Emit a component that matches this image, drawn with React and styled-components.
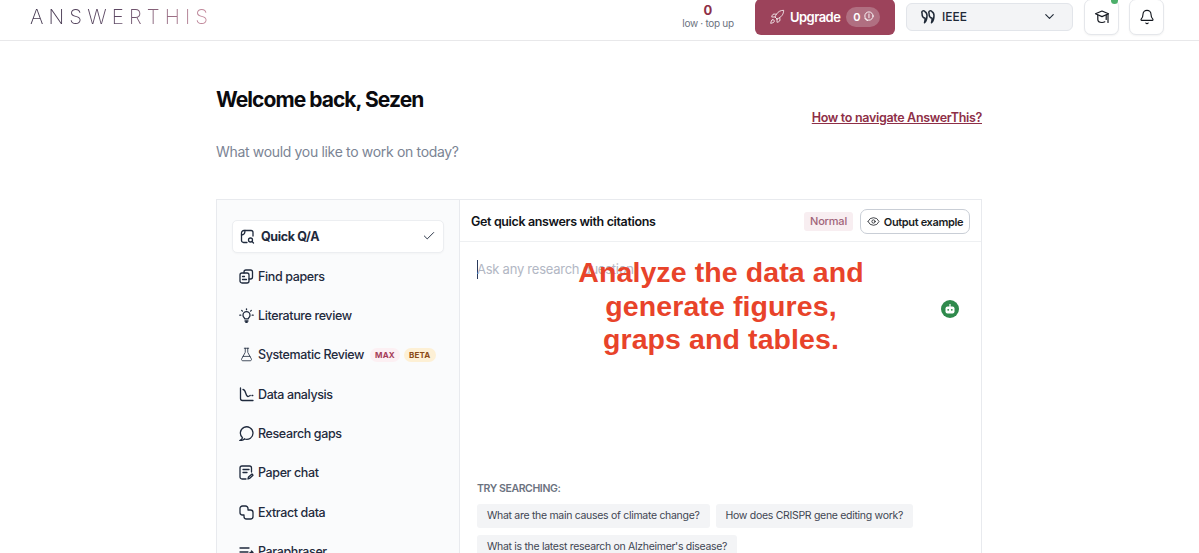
import styled, { createGlobalStyle } from 'styled-components'
import { Bell, Check, ChevronDown, Eye, FlaskConical, Rocket } from 'lucide-react'

const Global = createGlobalStyle`
  html, body {
    margin: 0;
    height: 100%;
    overflow: hidden;
    background: #fff;
    font-family: Inter, "Noto Sans", sans-serif;
    color: #1f2937;
  }
  svg { flex: none; }
`
const Page = styled.div`
  height: 100vh;
  overflow: hidden;
`
const Header = styled.header`
  height: 41px;
  box-sizing: border-box;
  padding: 0 35px 7px 30px;
  border-bottom: 1px solid #e8e8ea;
  display: flex;
  align-items: center;
`
const Logo = styled.div`
  font-family: Inter, Lato, sans-serif;
  font-weight: 200;
  font-size: 20.5px;
  letter-spacing: 5.1px;
  line-height: 1;
  margin-top: 1px;
  background: linear-gradient(90deg, #3c3048 0%, #5d4763 48%, #cb8c9e 100%);
  -webkit-background-clip: text;
  background-clip: text;
  color: transparent;
`
const Credits = styled.div`
  margin-left: auto;
  width: 50px;
  display: flex;
  flex-direction: column;
  align-items: center;
  white-space: nowrap;
  margin-right: 22px;
  b {
    font-size: 13px;
    line-height: 14px;
    font-weight: 700;
    color: #8e2f47;
  }
  span {
    font-size: 10px;
    line-height: 13px;
    color: #6b7280;
    letter-spacing: -0.3px;
  }
`
const Upgrade = styled.button`
  width: 140px;
  height: 36px;
  flex: none;
  border: 0;
  border-radius: 6px;
  background: #9c435b;
  color: #fff;
  font: 600 13px Inter, sans-serif;
  letter-spacing: -0.55px;
  display: flex;
  align-items: center;
  padding: 0 15px 0 14px;
  gap: 5px;
  margin-right: 11px;
`
const CoinPill = styled.span`
  margin-left: auto;
  height: 20px;
  padding: 0 6px 0 7px;
  border-radius: 10px;
  background: #b06f81;
  font-size: 11px;
  font-weight: 600;
  display: flex;
  align-items: center;
  gap: 3px;
`
const StyleSelect = styled.div`
  width: 167px;
  height: 28px;
  flex: none;
  box-sizing: border-box;
  border: 1px solid #e2e5ea;
  border-radius: 6px;
  background: #f3f4f6;
  display: flex;
  align-items: center;
  padding: 0 15px 0 14px;
  gap: 7px;
  font-size: 12px;
  font-weight: 500;
  color: #1f2937;
  margin-right: 11px;
  svg:last-child { margin-left: auto; }
`
const IconButton = styled.button`
  position: relative;
  width: 35px;
  height: 36px;
  flex: none;
  box-sizing: border-box;
  border: 1px solid #e5e7eb;
  border-radius: 7px;
  background: #fff;
  box-shadow: 0 1px 2px rgba(0, 0, 0, 0.05);
  display: flex;
  align-items: center;
  justify-content: center;
  padding: 0;
  margin-left: ${({ $gap }) => $gap || 0}px;
  color: #14181f;
`
const GreenDot = styled.span`
  position: absolute;
  top: -3px;
  right: 0;
  width: 7px;
  height: 7px;
  border-radius: 50%;
  background: #4caf6a;
`
const Main = styled.main`
  width: 766px;
  margin-left: 216px;
  padding-top: 47px;
`
const TitleRow = styled.div`
  display: flex;
  justify-content: space-between;
  align-items: flex-start;
`
const Title = styled.h1`
  margin: 0;
  font-size: 21px;
  line-height: 24px;
  font-weight: 700;
  letter-spacing: -0.95px;
  color: #0b0b0f;
`
const HelpLink = styled.a`
  margin-top: 22px;
  font-size: 12.5px;
  line-height: 16px;
  font-weight: 600;
  letter-spacing: -0.32px;
  color: #8e2f47;
  text-decoration: underline;
`
const Subtitle = styled.p`
  margin: 0;
  padding-top: 17px;
  font-size: 14px;
  line-height: 18px;
  letter-spacing: -0.33px;
  color: #7b8494;
`
const Card = styled.section`
  margin-top: 38px;
  height: 420px;
  box-sizing: border-box;
  border: 1px solid #e8eaee;
  display: grid;
  grid-template-columns: 243px 1fr;
`
const Sidebar = styled.nav`
  background: #fafbfc;
  border-right: 1px solid #e8eaee;
  padding: 19.6px 15px 0;
  display: flex;
  flex-direction: column;
`
const NavItem = styled.div`
  height: ${({ $active }) => ($active ? 33 : 39.3)}px;
  margin-bottom: ${({ $active }) => ($active ? 4 : 0)}px;
  flex: none;
  box-sizing: border-box;
  display: flex;
  align-items: center;
  gap: ${({ $active }) => ($active ? 6 : 4)}px;
  padding: 0 7px;
  font-size: 12.5px;
  font-weight: ${({ $active }) => ($active ? 700 : 500)};
  letter-spacing: -0.38px;
  color: #1f2a3d;
  white-space: nowrap;
  ${({ $active }) => $active && `
    background: #fff;
    border: 1px solid #eceef1;
    border-radius: 5px;
    box-shadow: 0 1px 2px rgba(0,0,0,.03);
  `}
`
const NavCheck = styled(Check)`
  margin-left: auto;
`
const Tag = styled.span`
  height: 14px;
  padding: 0 5px;
  margin-left: ${({ $first }) => ($first ? 2 : 0)}px;
  border-radius: 7px;
  font-size: 8px;
  font-weight: 700;
  line-height: 14px;
  letter-spacing: 0.2px;
  color: ${({ $tone }) => ($tone === 'beta' ? '#8a4b16' : '#a63d58')};
  background: ${({ $tone }) => ($tone === 'beta' ? '#fdf0d5' : '#fcf0f3')};
`
const Panel = styled.div`
  position: relative;
  display: flex;
  flex-direction: column;
  min-width: 0;
`
const PanelHead = styled.div`
  height: 42px;
  flex: none;
  box-sizing: border-box;
  border-bottom: 1px solid #eef0f2;
  padding: 2px 11px 0 11px;
  display: flex;
  align-items: center;
  font-size: 12.5px;
  font-weight: 600;
  letter-spacing: -0.36px;
  color: #111318;
`
const ModeBadge = styled.span`
  margin-left: auto;
  margin-right: 7px;
  height: 19px;
  padding: 0 6px;
  border-radius: 3px;
  background: #f8eef1;
  color: #a0647a;
  font-size: 11px;
  font-weight: 500;
  letter-spacing: -0.2px;
  line-height: 19px;
`
const OutputButton = styled.button`
  width: 110px;
  height: 25px;
  box-sizing: border-box;
  border: 1px solid #c9ced6;
  border-radius: 7px;
  background: #fff;
  display: flex;
  align-items: center;
  justify-content: center;
  gap: 4px;
  padding: 0;
  font: 600 11px Inter, sans-serif;
  letter-spacing: -0.35px;
  color: #1a1d24;
`
const Prompt = styled.div`
  flex: none;
  height: 222px;
  padding: 18px 17px 0;
  display: flex;
  align-items: flex-start;
  font-size: 13px;
  line-height: 18px;
  letter-spacing: -0.25px;
  color: #b2b7c4;
`
const Caret = styled.i`
  width: 1px;
  height: 19px;
  margin-right: -1px;
  background: #2b3a5c;
  flex: none;
`
const Notice = styled.div`
  position: absolute;
  top: 56px;
  left: 0;
  width: 522px;
  text-align: center;
  font-family: "Liberation Sans", Arial, sans-serif;
  font-size: 28.5px;
  line-height: 33.5px;
  font-weight: 700;
  letter-spacing: 0.1px;
  color: #e8432a;
`
const BotBadge = styled.span`
  position: absolute;
  top: 100px;
  right: 22px;
  width: 18px;
  height: 18px;
  border-radius: 50%;
  background: #2f8a4c;
  display: flex;
  align-items: center;
  justify-content: center;
`
const Suggestions = styled.div`
  padding: 0 17px;
`
const SuggestLabel = styled.div`
  font-size: 10.5px;
  line-height: 14px;
  font-weight: 600;
  letter-spacing: -0.4px;
  color: #6b7280;
  margin-bottom: 8px;
`
const ChipRow = styled.div`
  display: flex;
  flex-wrap: wrap;
  gap: 7px 6px;
`
const Chip = styled.span`
  height: 24px;
  padding: 0 10px;
  border-radius: 3px;
  background: #f3f4f6;
  font-size: 10.5px;
  line-height: 24px;
  letter-spacing: -0.3px;
  color: #3f4653;
  white-space: nowrap;
`

const strokeProps = { fill: 'none', stroke: 'currentColor', strokeWidth: 1.3, strokeLinecap: 'round', strokeLinejoin: 'round' }

const QuoteIcon = () => (
  <svg width="14" height="14" viewBox="0 0 14 14" {...strokeProps} strokeWidth={1.5}>
    <path d="M1 3a1.500 1.500 0 0 1 3 -1.200c1.500 .6 2 2 2 4 0 3-.8 5.500-2.500 7C4 11 4.200 9.500 4 8 2 8 1 6 1 3z" />
    <path d="M8 3a1.500 1.500 0 0 1 3 -1.200c1.500 .6 2 2 2 4 0 3-.8 5.500-2.500 7 .5-1.800 .7-3.300 .5-4.800C9 8 8 6 8 3z" />
  </svg>
)
const CoinIcon = () => (
  <svg width="11" height="11" viewBox="0 0 12 12" {...strokeProps} strokeWidth={1}>
    <circle cx="6.500" cy="5.500" r="4.500" />
    <path d="M6.500 3.200v4.200M2 8a4 4 0 0 0 3 2.500" />
  </svg>
)
const CapIcon = () => (
  <svg width="16" height="16" viewBox="0 0 16 16" {...strokeProps} strokeWidth={1.2}>
    <path d="M8 2 1.500 4.800 8 7.600l6.500-2.800z" />
    <path d="M3.800 6.200v4.300c0 1.800 1.900 3 4.200 3 1 0 2-.2 2.800-.7M12.200 6.200v4.300" />
    <path d="M14 5v8.500" />
  </svg>
)
const QuickIcon = () => (
  <svg width="15" height="15" viewBox="0 0 15 15" {...strokeProps}>
    <path d="M7 13.500H3.500a2 2 0 0 1-2-2V4A2.500 2.500 0 0 1 4 1.500h7a2 2 0 0 1 2 2V7" />
    <path d="M1.500 6C4 6 5 5 5 1.500" />
    <circle cx="10.500" cy="11" r="2" />
    <path d="M12 12.500l1.500 1.500" />
  </svg>
)
const PapersIcon = () => (
  <svg width="15" height="15" viewBox="0 0 15 15" {...strokeProps}>
    <rect x="1" y="4" width="9" height="10" rx="2" />
    <path d="M5 4V3a2 2 0 0 1 2-2h4.500a2 2 0 0 1 2 2v5a2 2 0 0 1-2 2H10" />
    <path d="M3.500 7.500h2M3.500 10.500h4" />
  </svg>
)
const BulbIcon = () => (
  <svg width="15" height="15" viewBox="0 0 15 15" {...strokeProps}>
    <path d="M5.700 10.800c0-1-1.700-1.600-1.700-3.600a3.500 3.500 0 0 1 7 0c0 2-1.700 2.600-1.700 3.600z" />
    <path d="M6 13h3M6.800 14.300h1.400" />
    <path d="M7.500 .8v.9M2.700 2.400l.7.7M12.300 2.400l-.7.7M.8 7.200h1M13.200 7.200h1" />
  </svg>
)
const ChartIcon = () => (
  <svg width="15" height="15" viewBox="0 0 15 15" {...strokeProps}>
    <path d="M1.500 1v10.500a2 2 0 0 0 2 2h10.500" />
    <path d="M4 2.500c3 0 2.500 7 5 7 1.500 0 1.500-1 2.200-1" />
    <path d="M13 8.500h.8" />
  </svg>
)
const GapsIcon = () => (
  <svg width="15" height="15" viewBox="0 0 15 15" {...strokeProps}>
    <path d="M1 14.500c1-.5 2-1.500 2.500-2.700A6.300 6.300 0 1 1 5.500 13" />
    <path d="M1 14.500c1.800 0 3.300-.5 4.500-1.500" />
  </svg>
)
const NoteIcon = () => (
  <svg width="15" height="15" viewBox="0 0 15 15" {...strokeProps}>
    <path d="M7 14H3a2 2 0 0 1-2-2V3a2 2 0 0 1 2-2h7.500a2 2 0 0 1 2 2v4" />
    <path d="M4 4.500h6M4 7.500h4" />
    <path d="M9 14l.5-2 3.500-3 1 1.200-3.500 3.200z" />
  </svg>
)
const ExtractIcon = () => (
  <svg width="15" height="15" viewBox="0 0 15 15" {...strokeProps}>
    <path d="M5 10H3.500A2.500 2.500 0 0 1 1 7.500v-4A2.500 2.500 0 0 1 3.500 1h3A2.500 2.500 0 0 1 9 3.500V5h2.500A2.500 2.500 0 0 1 14 7.500v4a2.500 2.500 0 0 1-2.500 2.500h-4A2.500 2.500 0 0 1 5 11.500V10" />
  </svg>
)
const ParaIcon = () => (
  <svg width="15" height="15" viewBox="0 0 15 15" {...strokeProps}>
    <path d="M1 4h9M1 8h8M1 12h6M11 8.500h3M12.500 7l1.500 1.500L12.500 10" />
  </svg>
)
const RobotIcon = () => (
  <svg width="12" height="12" viewBox="0 0 12 12">
    <rect x="1.500" y="3.500" width="9" height="7" rx="2" fill="#fff" />
    <rect x="5.400" y="1" width="1.200" height="3" fill="#fff" />
    <circle cx="4.200" cy="6.800" r=".9" fill="#2f8a4c" />
    <circle cx="7.800" cy="6.800" r=".9" fill="#2f8a4c" />
  </svg>
)

const navItems = [
  { label: 'Find papers', icon: <PapersIcon /> },
  { label: 'Literature review', icon: <BulbIcon /> },
  { label: 'Systematic Review', icon: <FlaskConical size={15} strokeWidth={1.3} />, tags: true },
  { label: 'Data analysis', icon: <ChartIcon /> },
  { label: 'Research gaps', icon: <GapsIcon /> },
  { label: 'Paper chat', icon: <NoteIcon /> },
  { label: 'Extract data', icon: <ExtractIcon /> },
  { label: 'Paraphraser', icon: <ParaIcon /> },
]

const suggestions = [
  'What are the main causes of climate change?',
  'How does CRISPR gene editing work?',
  "What is the latest research on Alzheimer's disease?",
]

export default function App() {
  return (
    <Page>
      <Global />
      <Header>
        <Logo>ANSWERTHIS</Logo>
        <Credits>
          <b>0</b>
          <span>low · top up</span>
        </Credits>
        <Upgrade>
          <Rocket size={16} strokeWidth={1.2} />
          Upgrade
          <CoinPill>0 <CoinIcon /></CoinPill>
        </Upgrade>
        <StyleSelect>
          <QuoteIcon />
          IEEE
          <ChevronDown size={15} strokeWidth={1.8} />
        </StyleSelect>
        <IconButton>
          <CapIcon />
          <GreenDot />
        </IconButton>
        <IconButton $gap={10}>
          <Bell size={16} strokeWidth={1.7} />
        </IconButton>
      </Header>
      <Main>
        <TitleRow>
          <Title>Welcome back, Sezen</Title>
          <HelpLink>How to navigate AnswerThis?</HelpLink>
        </TitleRow>
        <Subtitle>What would you like to work on today?</Subtitle>
        <Card>
          <Sidebar>
            <NavItem $active>
              <QuickIcon />
              Quick Q/A
              <NavCheck size={14} strokeWidth={1.6} />
            </NavItem>
            {navItems.map((item) => (
              <NavItem key={item.label}>
                {item.icon}
                {item.label}
                {item.tags && <Tag $first>MAX</Tag>}
                {item.tags && <Tag $tone="beta">BETA</Tag>}
              </NavItem>
            ))}
          </Sidebar>
          <Panel>
            <PanelHead>
              Get quick answers with citations
              <ModeBadge>Normal</ModeBadge>
              <OutputButton><Eye size={13} strokeWidth={1.5} />Output example</OutputButton>
            </PanelHead>
            <Prompt><Caret />Ask any research question</Prompt>
            <Notice>Analyze the data and<br />generate figures,<br />graps and tables.</Notice>
            <BotBadge><RobotIcon /></BotBadge>
            <Suggestions>
              <SuggestLabel>TRY SEARCHING:</SuggestLabel>
              <ChipRow>
                {suggestions.map((text) => <Chip key={text}>{text}</Chip>)}
              </ChipRow>
            </Suggestions>
          </Panel>
        </Card>
      </Main>
    </Page>
  )
}
